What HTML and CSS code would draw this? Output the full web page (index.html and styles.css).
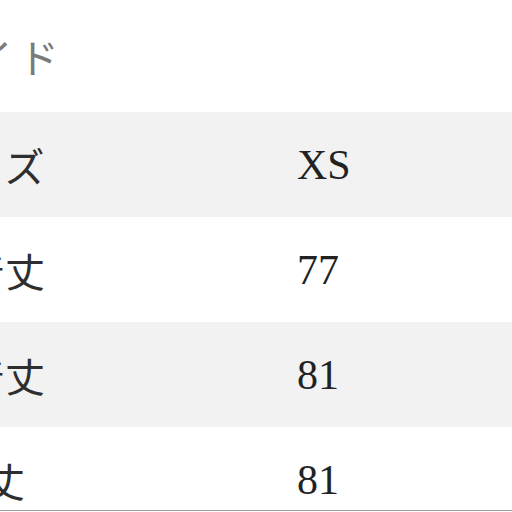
FILE: index.html
```html
<!DOCTYPE html>
<html lang="ja">
<head>
<meta charset="utf-8">
<link rel="stylesheet" href="styles.css">
<title>サイズガイド</title>
</head>
<body>
<main class="guide">
  <h2 class="title">サイズガイド</h2>
  <div class="size-table">
    <div class="row shade"><div class="label">サイズ</div><div class="value">XS</div></div>
    <div class="row"><div class="label">前着丈</div><div class="value">77</div></div>
    <div class="row shade"><div class="label">後着丈</div><div class="value">81</div></div>
    <div class="row"><div class="label">袖丈</div><div class="value">81</div></div>
  </div>
</main>
<div class="bottom-rule"></div>
</body>
</html>
```
FILE: styles.css
```css
html, body {
  margin: 0;
  padding: 0;
  background: #ffffff;
  overflow: hidden;
}
body {
  width: 512px;
  height: 512px;
  font-family: "Liberation Serif", "Noto Sans CJK JP", serif;
  color: #2a2a2a;
}
.guide {
  margin-left: -220px;
  width: 920px;
}
.title {
  margin: 0;
  height: 112px;
  display: flex;
  align-items: center;
  padding-left: 10px;
  font-size: 40px;
  letter-spacing: 6px;
  font-weight: 400;
  color: #7a7a7a;
}
.size-table {
  display: flex;
  flex-direction: column;
}
.row {
  display: grid;
  grid-template-columns: 410px 1fr;
  height: 105px;
  align-items: center;
  background: #ffffff;
}
.row.shade {
  background: #f2f2f2;
}
.label {
  text-align: center;
  font-size: 40px;
  color: #2e2e2e;
}
.value {
  padding-left: 107px;
  font-size: 42px;
  color: #222222;
}
.bottom-rule {
  position: fixed;
  left: 0;
  right: 0;
  bottom: 1px;
  height: 1px;
  background: #9a9a9a;
}
```
